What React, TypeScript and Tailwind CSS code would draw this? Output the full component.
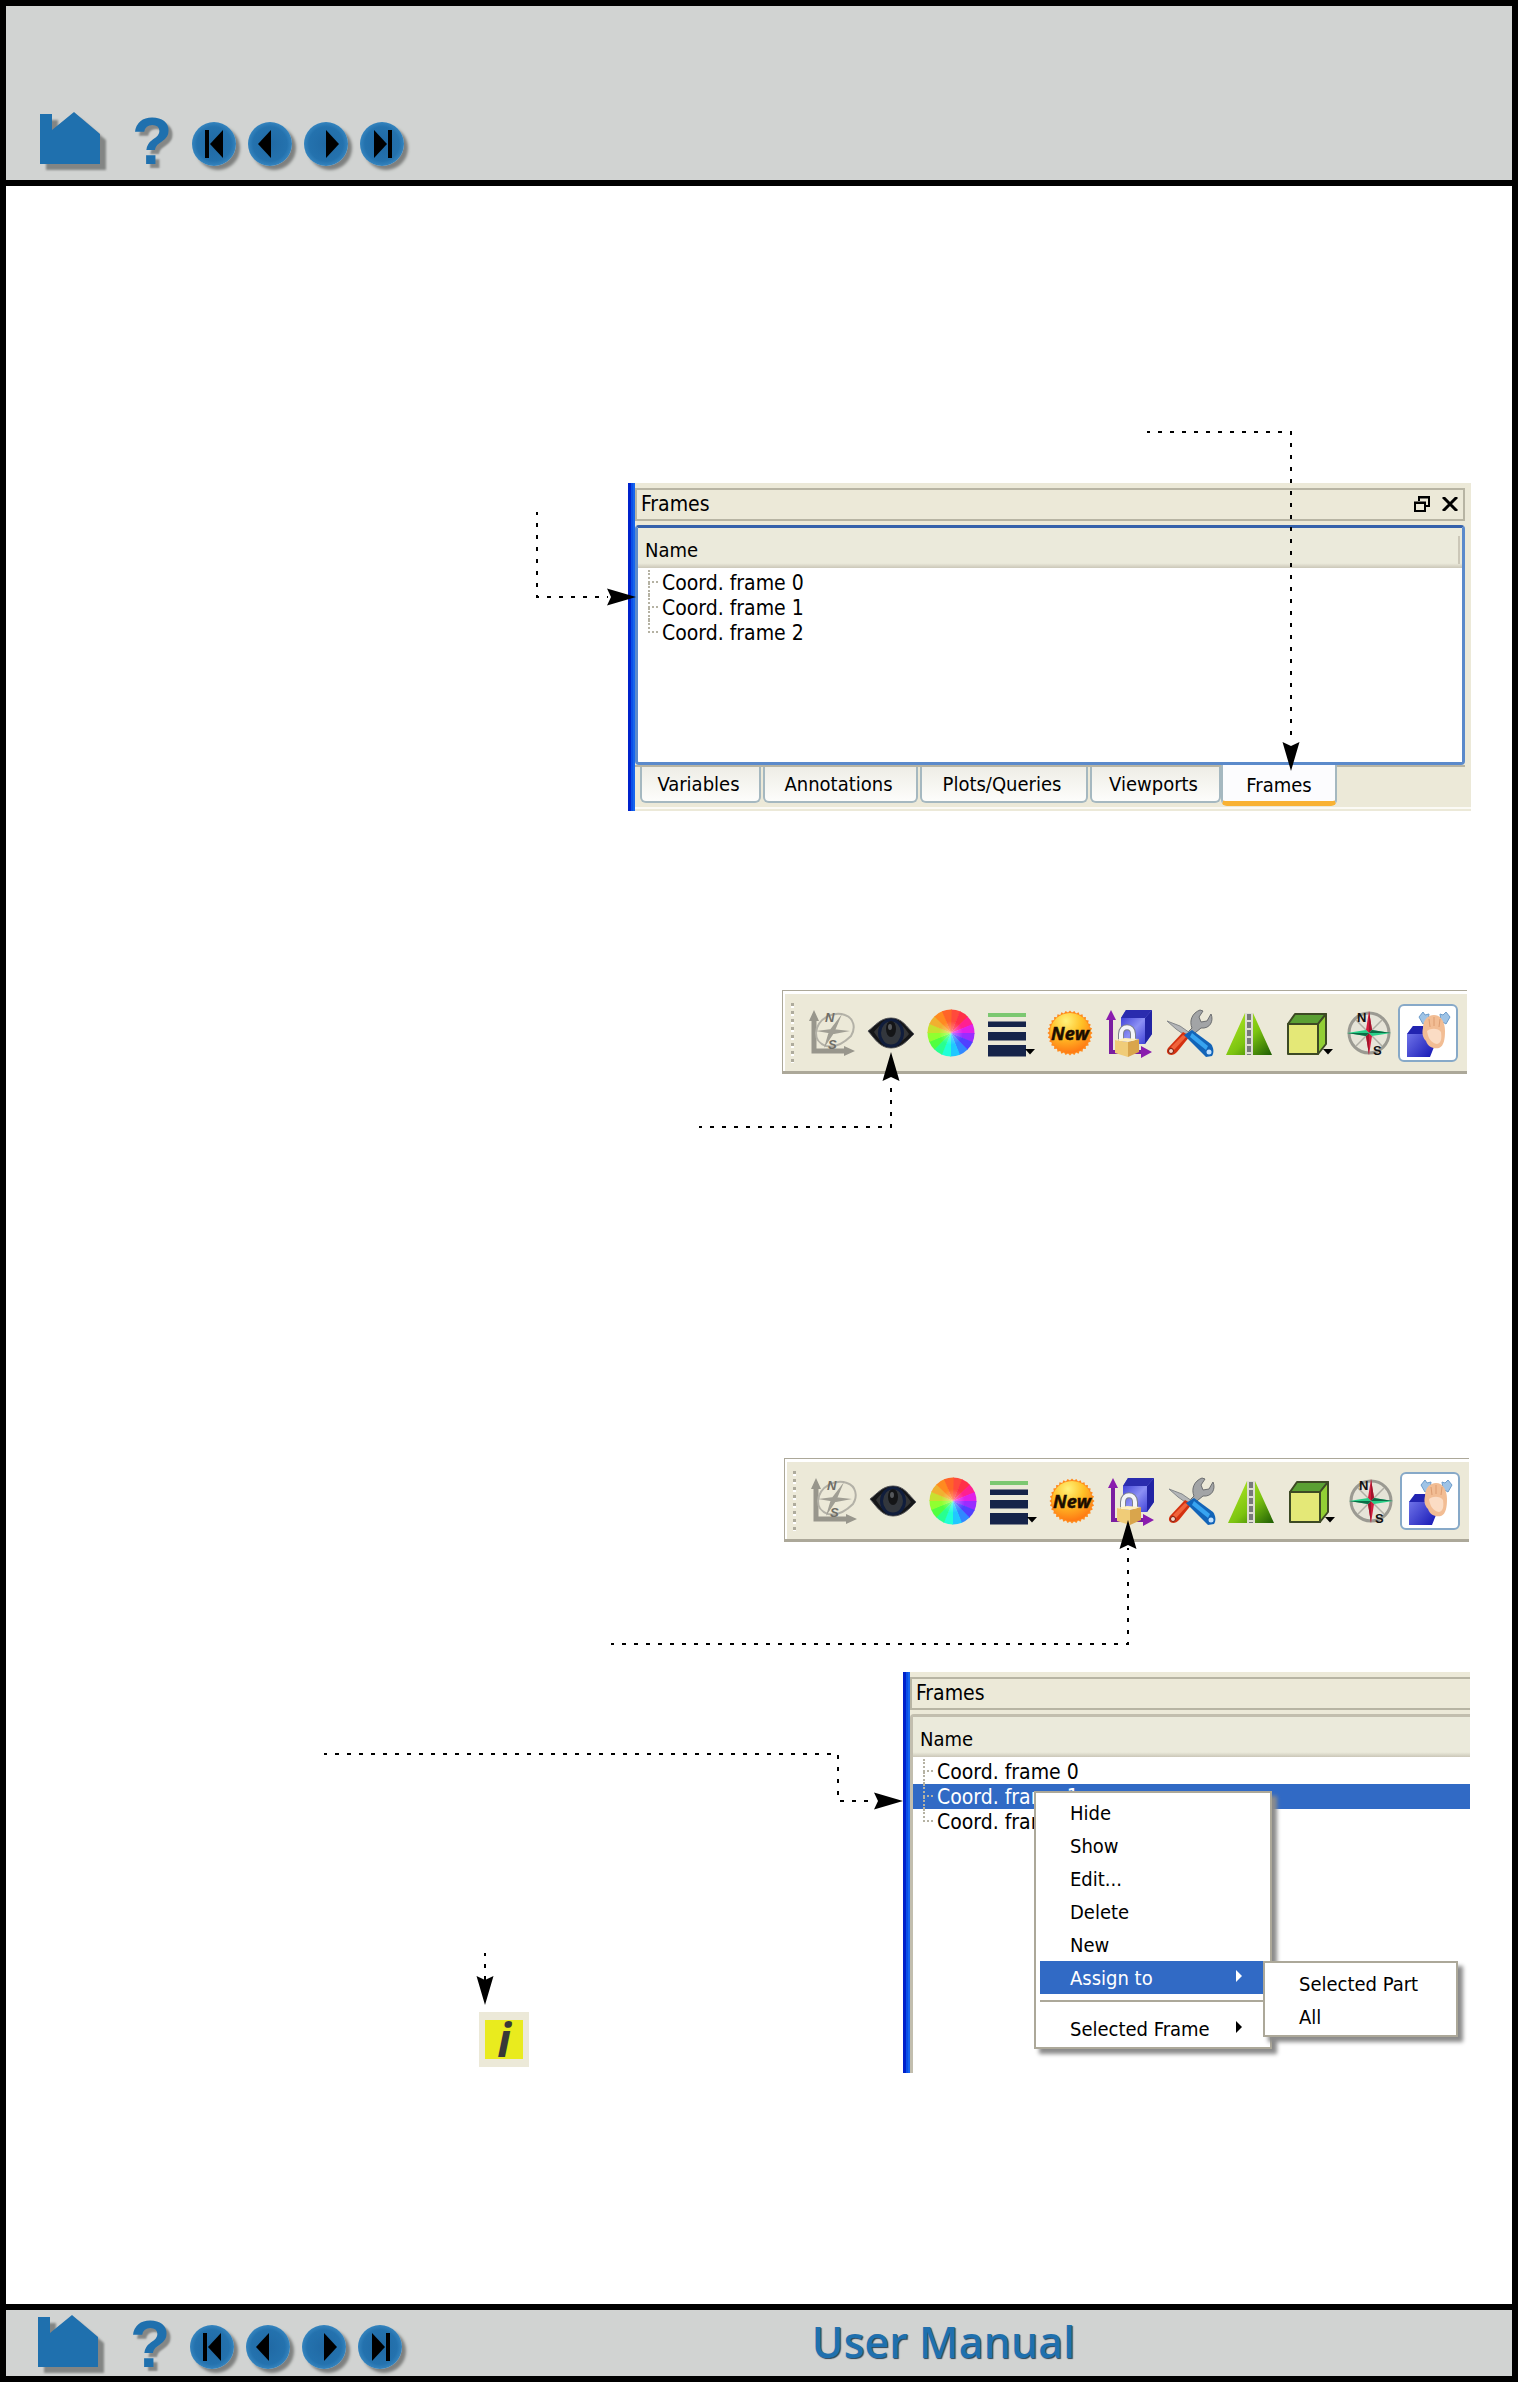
import React from "react";

const UI_FONT = "font-['DejaVu_Sans_Condensed','DejaVu_Sans',sans-serif]";

/* ---------- navigation bars ---------- */

function House() {
  return (
    <svg viewBox="0 0 68 60" className="h-[60px] w-[68px]" aria-hidden="true">
      <defs>
        <filter id="soft" x="-20%" y="-20%" width="140%" height="140%">
          <feGaussianBlur stdDeviation="1" />
        </filter>
      </defs>
      <path d="M6 8H18V23L40 6L66 28V58H6Z" fill="#838584" filter="url(#soft)" />
      <path d="M0 2H12V18L34 0L60 22V52H0Z" fill="#1f70ae" />
    </svg>
  );
}

const GLYPHS: Record<string, React.ReactNode> = {
  First: (
    <>
      <rect x="13" y="8" width="4" height="28" />
      <path d="M18 22L31 8V36Z" />
    </>
  ),
  Previous: <path d="M10 22L23 8V36Z" />,
  Next: <path d="M35 22L22 8V36Z" />,
  Last: (
    <>
      <path d="M27 22L14 8V36Z" />
      <rect x="28" y="8" width="4" height="28" />
    </>
  ),
};

function RoundButton({ name }: { name: string }) {
  return (
    <button
      type="button"
      aria-label={name}
      className="h-11 w-11 rounded-full bg-[radial-gradient(circle_at_50%_50%,#2069a4_0%,#2472ae_55%,#4a9bd3_90%,#2a70a5_100%)] shadow-[4px_4px_3px_#7e807f]"
    >
      <svg viewBox="0 0 44 44" className="h-11 w-11" fill="#000" aria-hidden="true">
        {GLYPHS[name]}
      </svg>
    </button>
  );
}

function NavIcons() {
  return (
    <nav className="flex items-end" aria-label="Manual pages">
      <a href="#home" aria-label="Home" className="-mb-1.5 block">
        <House />
      </a>
      <a
        href="#help"
        className="ml-6 block w-10 text-center font-['Liberation_Sans',sans-serif] text-[66px] font-bold leading-[50px] text-[#1f70ae] [text-shadow:4px_4px_2px_#858786]"
      >
        ?
      </a>
      <div className="ml-5 flex gap-3">
        {["First", "Previous", "Next", "Last"].map((n) => (
          <RoundButton key={n} name={n} />
        ))}
      </div>
    </nav>
  );
}

/* ---------- dotted callouts ---------- */

function Callout({
  w,
  h,
  line,
  head,
  className,
}: {
  w: number;
  h: number;
  line: string;
  head: string;
  className: string;
}) {
  return (
    <svg
      width={w}
      height={h}
      viewBox={`0 0 ${w} ${h}`}
      className={`pointer-events-none absolute z-10 overflow-visible ${className}`}
      aria-hidden="true"
    >
      <path d={line} fill="none" stroke="#000" strokeWidth="2" strokeDasharray="4 8" strokeDashoffset="1" />
      <path d={head} fill="#000" />
    </svg>
  );
}

/* ---------- toolbar ---------- */

const WHEEL = [
  "#ff4a3c", "#ff3048", "#ff2090", "#e020e8", "#9a2cff", "#5040ff",
  "#3088ff", "#20c8ff", "#20ffd8", "#28ff90", "#50ff40", "#90ff30",
  "#c8e030", "#f0b030", "#ff8a20", "#ff6428",
];

function ColorWheel() {
  const p = (a: number) => `${24 + 23.5 * Math.sin(a)} ${24 - 23.5 * Math.cos(a)}`;
  const step = (2 * Math.PI) / 16;
  return (
    <>
      {WHEEL.map((c, i) => (
        <path key={c} d={`M24 24L${p(i * step)}A23.5 23.5 0 0 1 ${p((i + 1) * step + 0.03)}Z`} fill={c} />
      ))}
      <circle cx="24" cy="24" r="12" fill="url(#wheelGlow)" />
    </>
  );
}

const SPIKES = Array.from({ length: 64 }, (_, i) => {
  const r = i % 2 ? 20.5 : 22.5;
  const a = (i * Math.PI) / 32;
  return `${(24 + r * Math.sin(a)).toFixed(1)},${(24 - r * Math.cos(a)).toFixed(1)}`;
}).join(" ");

const Caret = () => <path d="M38 40H48L43 45.500Z" fill="#000" />;

const TOOLS: { name: string; art: React.ReactNode }[] = [
  {
    name: "Frame axes",
    art: (
      <g fill="none" stroke="#98968c" strokeWidth="2">
        <path d="M6 9V42H38" strokeWidth="5" />
        <path d="M1 12L6 1L11 12ZM36 37L47 42L36 47Z" fill="#98968c" stroke="none" />
        <path d="M8 24C9 9 26 2 37 6C46 9 48 19 43 27C36 34 28 39 18 37C10 34 8 30 8 24Z" stroke="#b3b1a7" />
        <path d="M8 22L24 20L42 22L26 25ZM34 5L26 24L16 39L21 22Z" fill="#a09e94" stroke="none" />
        <text x="17" y="13" fontSize="13" fontStyle="italic" fontWeight="bold" fontFamily="Liberation Sans, sans-serif" fill="#6f6d66" stroke="none">N</text>
        <text x="20" y="40" fontSize="13" fontStyle="italic" fontWeight="bold" fontFamily="Liberation Sans, sans-serif" fill="#6f6d66" stroke="none">S</text>
      </g>
    ),
  },
  {
    name: "Visibility",
    art: (
      <>
        <path d="M1 22C8 17 13 9 24 9C35 9 39 17 47 25C40 32 34 39 24 39C13 39 8 30 1 22Z" fill="#151618" stroke="#55565a" strokeWidth="1" />
        <path d="M7 23C12 17 16 12 24 12C33 12 38 19 42 25C37 31 31 36 24 36C15 36 11 29 7 23Z" fill="#343537" />
        <ellipse cx="24" cy="24" rx="11.500" ry="13" fill="#33373d" stroke="#101d3c" strokeWidth="3" />
        <ellipse cx="24" cy="20" rx="5" ry="8" fill="#141517" />
        <ellipse cx="23" cy="18" rx="2" ry="3" fill="#55585c" />
      </>
    ),
  },
  { name: "Color", art: <ColorWheel /> },
  {
    name: "Line width",
    art: (
      <>
        <path d="M1 4H39V8H1Z" fill="#7cc871" />
        <path d="M1 12.500H39V18H1ZM1 23H39V31.500H1ZM1 36H39V47.500H1Z" fill="#16244a" />
        <Caret />
      </>
    ),
  },
  {
    name: "New",
    art: (
      <>
        <polygon points={SPIKES} fill="#ff8a1c" />
        <circle cx="24" cy="24" r="20" fill="url(#newFill)" />
        <text x="24" y="31" textAnchor="middle" fontSize="18" fontStyle="italic" fontWeight="bold" fontFamily="Open Sans, sans-serif" fill="#1c0d00" stroke="#1c0d00" strokeWidth="0.500">New</text>
      </>
    ),
  },
  {
    name: "Frame lock",
    art: (
      <>
        <path d="M5 10V43H36" fill="none" stroke="#7a1ea1" strokeWidth="4" />
        <path d="M0 11L5 1L10 11ZM35 37L46 43L35 49Z" fill="#8a1cae" />
        <path d="M15 9L20 1H46V25L39 35H15Z" fill="url(#blueBox)" />
        <path d="M15 9L20 1H46L39 9Z" fill="#2a2cae" />
        <path d="M39 9L46 1V25L39 35Z" fill="#2224a4" />
        <path d="M15 32V25C15 16 27 16 27 25V32" fill="none" stroke="#7d808b" strokeWidth="6" />
        <path d="M15 32V25C15 16 27 16 27 25V32" fill="none" stroke="#f4f5f8" strokeWidth="4" />
        <path d="M9 31L22 33V48L9 44Z" fill="#f0cc78" />
        <path d="M22 33L33 30V43L22 48Z" fill="#d9a54c" />
        <path d="M9 31L19 29L33 30L22 33Z" fill="#fff0bd" />
      </>
    ),
  },
  {
    name: "Tools",
    art: (
      <>
        <path d="M20 25L26 19C23 12 26 4 34 1L37 2L33 8L35 13L41 12L45 5C48 12 44 20 35 19L24 28Z" fill="#a2a4a6" stroke="#6c6e70" strokeWidth="1" />
        <path d="M1 12L14 17L24 24L20 27L10 20Z" fill="#b4b6b8" stroke="#85888a" strokeWidth="1" />
        <path d="M17 23L24 27L11 43C6 49 -2 45 2 39Z" fill="#d43110" />
        <path d="M17 26L20 28L8 41L5 38Z" fill="#f0643c" />
        <circle cx="5" cy="42" r="2.500" fill="#f3d6c8" stroke="#7c1a08" />
        <path d="M18 26L26 21L45 35C48 39 48 44 46 47L40 48Z" fill="#1264b8" />
        <path d="M26 24L42 37L40 41L24 28Z" fill="#38a4f0" />
        <circle cx="43" cy="43" r="2.500" fill="#bfe0ff" />
      </>
    ),
  },
  {
    name: "Clip",
    art: (
      <>
        <path d="M20 4L1 46H20ZM28 4L47 46H28Z" fill="url(#road)" />
        <path d="M20 4H28V46H20Z" fill="#dddcd2" />
        <path d="M24 5V46" stroke="#77797b" strokeWidth="4" strokeDasharray="6 2" />
      </>
    ),
  },
  {
    name: "Box",
    art: (
      <g stroke="#3d4a24" strokeWidth="2" strokeLinejoin="round">
        <path d="M3 15L10 5H41L33 15Z" fill="#5aa033" />
        <path d="M33 15L41 5V35L33 45Z" fill="#92cf35" />
        <path d="M3 15H33V45H3Z" fill="#e4e877" />
        <g stroke="none">
          <Caret />
        </g>
      </g>
    ),
  },
  {
    name: "Compass",
    art: (
      <>
        <circle cx="24" cy="24" r="20" fill="#e6e4d8" stroke="#9b9a92" strokeWidth="3" />
        <path d="M11 11L37 37M37 11L11 37" stroke="#b0aea4" strokeWidth="1.500" />
        <path d="M24 2L27 21L24 24L21 21ZM24 46L21 27L24 24L27 27Z" fill="#d11c3c" />
        <path d="M24 2V24L27 21ZM24 46V24L21 27Z" fill="#a0142c" />
        <path d="M2 24L21 21L24 24L21 27ZM46 24L27 27L24 24L27 21Z" fill="#28cf88" />
        <path d="M2 24H24L21 27ZM46 24H24L27 21Z" fill="#0d6b45" />
        <text x="12" y="13" fontSize="13" fontWeight="bold" fontFamily="Liberation Sans, sans-serif" fill="#111">N</text>
        <text x="28" y="46" fontSize="13" fontWeight="bold" fontFamily="Liberation Sans, sans-serif" fill="#111">S</text>
      </>
    ),
  },
  {
    name: "Pick",
    art: (
      <>
        <path d="M3 25L9 17H30V38L26 48H3Z" fill="url(#blueBox2)" />
        <path d="M3 25L9 17H30L24 25Z" fill="#2224b0" />
        <path d="M15 8L19 3L21 6L25 5L24 12L19 15ZM46 8L42 3L39 6L36 5L37 12L42 15Z" fill="#9ec3e6" stroke="#6d9ccb" />
        <path d="M19 19C19 11 24 6 30 6C37 6 41 13 41 22C41 30 40 37 35 39C29 40 24 38 22 32C18 28 18 23 19 19Z" fill="#f2bd94" />
        <path d="M23 22C27 19 34 19 37 23C38 30 37 34 33 35C27 34 24 29 23 22Z" fill="#fbdcc4" />
        <path d="M25 10L26 18M30 8V17M36 10L35 18" stroke="#dc9c70" strokeWidth="1" />
      </>
    ),
  },
];

function ToolArtDefs() {
  return (
    <svg width="0" height="0" className="absolute" aria-hidden="true">
      <defs>
        <radialGradient id="wheelGlow">
          <stop offset="0" stopColor="#fff" stopOpacity="0.400" />
          <stop offset="1" stopColor="#fff" stopOpacity="0" />
        </radialGradient>
        <radialGradient id="newFill" cx="0.400" cy="0.200" r="0.800">
          <stop offset="0" stopColor="#fff27a" />
          <stop offset="0.500" stopColor="#ffc026" />
          <stop offset="1" stopColor="#ff7a14" />
        </radialGradient>
        <linearGradient id="blueBox" x1="0" y1="0" x2="1" y2="1">
          <stop offset="0" stopColor="#2c2ed0" />
          <stop offset="0.500" stopColor="#8c90f4" />
          <stop offset="1" stopColor="#2c2ed0" />
        </linearGradient>
        <linearGradient id="blueBox2" x1="0" y1="0" x2="1" y2="1">
          <stop offset="0" stopColor="#7c80f0" />
          <stop offset="1" stopColor="#1416b4" />
        </linearGradient>
        <linearGradient id="road" x1="0" y1="0" x2="1" y2="1">
          <stop offset="0" stopColor="#b8ec28" />
          <stop offset="0.550" stopColor="#7cc410" />
          <stop offset="1" stopColor="#1e5c04" />
        </linearGradient>
      </defs>
    </svg>
  );
}

function Toolbar() {
  return (
    <div
      role="toolbar"
      aria-label="Frame tools"
      className="flex h-[84px] w-[685px] items-center border-b-[3px] border-l border-t border-[#aca899] bg-[#ece9d8] pl-2 pr-[9px] pt-[3px] shadow-[inset_2px_3px_0_#fff]"
    >
      <div className="mr-2 h-[60px] w-[3px] bg-[repeating-linear-gradient(180deg,#aeab9c_0_3px,#fff_3px_5px,transparent_5px_8px)]" />
      <div className="grid flex-1 grid-cols-11">
        {TOOLS.map((t, i) => (
          <button
            key={t.name}
            type="button"
            aria-label={t.name}
            className={
              i === 10
                ? "flex h-[58px] items-center justify-center rounded-md border-2 border-[#87a9c8] bg-white"
                : "flex h-[58px] items-center justify-center"
            }
          >
            <svg viewBox="0 0 48 48" className="h-12 w-12 overflow-visible" aria-hidden="true">
              {t.art}
            </svg>
          </button>
        ))}
      </div>
    </div>
  );
}

/* ---------- frames panels ---------- */

function FrameTree({ selected }: { selected?: number }) {
  return (
    <ul className="pt-[2px] text-[21px]">
      {[0, 1, 2].map((n) => (
        <li key={n} className={n === selected ? "flex h-[25px] items-center bg-[#316ac5] text-white" : "flex h-[25px] items-center"}>
          <span className="ml-[10px] mr-1 flex h-full w-[10px] flex-col" aria-hidden="true">
            <span className="h-[13px] border-b-2 border-l-2 border-dotted border-[#b5b2a3]" />
            {n < 2 && <span className="flex-1 border-l-2 border-dotted border-[#b5b2a3]" />}
          </span>
          Coord. frame {n}
        </li>
      ))}
    </ul>
  );
}

function WindowEdge() {
  return <div className="w-[7px] shrink-0 bg-[linear-gradient(90deg,#0022cc_0_3px,#0a50e8_3px_5px,#1664ee_5px)]" />;
}

const COLUMN_HEAD = "flex items-center bg-[linear-gradient(180deg,#ebeadb_88%,#cbc7b8)] pl-[7px] pt-1";
const TAB =
  "flex h-9 items-center justify-center rounded-b-md border-2 border-t-0 border-[#a5b8c0] bg-[linear-gradient(180deg,#eeede6,#fdfdfb)] pr-1";

function FramesPanel() {
  return (
    <section className={`flex h-[328px] w-[843px] bg-[#ece9d8] text-[20px] leading-6 text-black ${UI_FONT}`}>
      <WindowEdge />
      <div className="flex min-w-0 flex-1 flex-col pr-[6px] pt-[5px]">
        <header className="flex h-[33px] shrink-0 items-center border-2 border-[#b7b4a3] pb-[2px] pl-1 pr-[5px]">
          <h2 className="flex-1 text-[21px]">Frames</h2>
          <button type="button" aria-label="Restore" className="mr-3">
            <svg viewBox="0 0 16 17" className="h-[17px] w-4" fill="none" stroke="#000" strokeWidth="2" aria-hidden="true">
              <path d="M5 6V2H15V11H12M4 2.500H16" />
              <path d="M1 7.500H11V16H1ZM0 8H12" />
            </svg>
          </button>
          <button type="button" aria-label="Close">
            <svg viewBox="0 0 16 14" className="h-[14px] w-4" fill="none" stroke="#000" strokeWidth="3" aria-hidden="true">
              <path d="M1 0L15 14M15 0L1 14" />
            </svg>
          </button>
        </header>
        <div className="mt-1 h-[240px] rounded-[4px] border-[3px] border-[#5b8acb] border-t-[#3561ab] bg-white">
          <div className={`h-10 pr-[2px] ${COLUMN_HEAD}`}>
            <span className="flex-1">Name</span>
            <span className="h-7 w-[2px] bg-[#cbc7b8]" />
          </div>
          <FrameTree />
        </div>
        <div role="tablist" className="flex border-t-2 border-[#b7b4a3] pl-[5px]">
          <button type="button" role="tab" className={`w-[121px] ${TAB}`}>Variables</button>
          <button type="button" role="tab" className={`ml-[2px] w-[155px] ${TAB}`}>Annotations</button>
          <button type="button" role="tab" className={`ml-[2px] w-[168px] ${TAB}`}>Plots/Queries</button>
          <button type="button" role="tab" className={`ml-[2px] w-[131px] ${TAB}`}>Viewports</button>
          <button
            type="button"
            role="tab"
            aria-selected="true"
            className="-mt-[2px] flex h-[41px] w-[116px] items-center justify-center rounded-b-md border-x-2 border-b-[5px] border-x-[#a5b8c0] border-b-[#f9b233] bg-[#fcfcfe] pt-1"
          >
            Frames
          </button>
        </div>
        <div className="-mr-[6px] mt-px h-[2px] bg-[#fbfaf5]" />
      </div>
    </section>
  );
}

const MENU = "absolute z-20 border-2 border-[#aca899] bg-white px-1 text-black shadow-[5px_5px_4px_#8c8c8c]";

function MenuItem({ label, arrow, active }: { label: string; arrow?: boolean; active?: boolean }) {
  return (
    <li role="none">
      <button
        type="button"
        role="menuitem"
        className={
          active
            ? "flex h-[33px] w-full items-center bg-[#316ac5] pl-[30px] pr-6 text-white"
            : "flex h-[33px] w-full items-center pl-[30px] pr-6"
        }
      >
        <span className="flex-1 whitespace-nowrap text-left">{label}</span>
        {arrow && (
          <svg viewBox="0 0 6 12" className="-mt-1 h-3 w-[6px]" fill="currentColor" aria-hidden="true">
            <path d="M0 0L6 6L0 12Z" />
          </svg>
        )}
      </button>
    </li>
  );
}

function FramesPanelWithMenu() {
  return (
    <section className={`relative flex h-[401px] w-[567px] bg-[#ece9d8] text-[20px] leading-6 text-black ${UI_FONT}`}>
      <WindowEdge />
      <div className="flex min-w-0 flex-1 flex-col pt-[5px]">
        <header className="flex h-[33px] shrink-0 items-center border-2 border-r-0 border-[#b7b4a3] pb-[2px] pl-1">
          <h2 className="text-[21px]">Frames</h2>
        </header>
        <div className="mt-1 flex-1 rounded-tl-[4px] border-l-[3px] border-t-[3px] border-[#c2beae] bg-white">
          <div className={`h-10 ${COLUMN_HEAD}`}>Name</div>
          <FrameTree selected={1} />
        </div>
      </div>
      <ul role="menu" className={`left-[131px] top-[119px] w-[238px] pb-[2px] pt-[3px] ${MENU}`}>
        <MenuItem label="Hide" />
        <MenuItem label="Show" />
        <MenuItem label="Edit..." />
        <MenuItem label="Delete" />
        <MenuItem label="New" />
        <MenuItem label="Assign to" arrow active />
        <li role="separator" className="mb-[10px] mt-1.5 h-[2px] bg-[#aca899]" />
        <MenuItem label="Selected Frame" arrow />
      </ul>
      <ul role="menu" className={`left-[360px] top-[289px] w-[195px] pb-[2px] pt-1 ${MENU}`}>
        <MenuItem label="Selected Part" />
        <MenuItem label="All" />
      </ul>
    </section>
  );
}

/* ---------- page ---------- */

export default function App() {
  return (
    <div className="flex min-h-screen flex-col border-[6px] border-black bg-white">
      <ToolArtDefs />
      <header className="flex h-[180px] items-end border-b-[6px] border-black bg-[#d1d3d2] pb-[14px] pl-[34px]">
        <NavIcons />
      </header>

      <main className="flex flex-1 flex-col items-end pr-[41px] pt-[297px]">
        <div className="relative">
          <FramesPanel />
          <Callout className="right-[835px] top-[29px]" w={100} h={95} line="M1 0V85H72" head="M100 85L71 76.500L75 85L71 93.500Z" />
          <Callout className="-top-[52px] right-[171px]" w={154} h={341} line="M1 1H145V312" head="M145 340L136.500 311L145 315L153.500 311Z" />
        </div>

        <div className="relative mr-1 mt-[179px]">
          <Toolbar />
          <Callout className="right-[567px] top-[62px]" w={201} h={77} line="M0 75H192V28" head="M192 0L183.500 29L192 25L200.500 29Z" />
        </div>

        <div className="relative mr-[2px] mt-[384px]">
          <Toolbar />
          <Callout className="right-[332px] top-[62px]" w={526} h={126} line="M0 124H517V28" head="M517 0L508.500 29L517 25L525.500 29Z" />
        </div>

        <div className="relative mr-[1px] mt-[130px]">
          <FramesPanelWithMenu />
          <Callout className="right-[567px] top-[81px]" w={579} h={57} line="M0 1H514V48H551" head="M579 48L550 39.500L554 48L550 56.500Z" />
          <div className="absolute right-[941px] top-[340px] flex h-[55px] w-[50px] items-center justify-center bg-[#ece9d8]">
            <button
              type="button"
              aria-label="Information"
              className="flex h-[39px] w-[38px] items-center justify-center bg-[#e9eb1e] font-['Open_Sans',sans-serif] text-[46px] font-bold italic leading-[39px] text-[#383838]"
            >
              i
            </button>
            <Callout className="-top-[60px] left-0" w={14} h={54} line="M6 1V28" head="M6 53L-2.500 24L6 28L14.500 24Z" />
          </div>
        </div>
      </main>

      <footer className="relative flex h-[72px] items-end border-t-[6px] border-black bg-[#d1d3d2] pb-[7px] pl-8">
        <NavIcons />
        <p className="absolute left-[53.5%] top-2 font-['Open_Sans',sans-serif] text-[43px] font-semibold leading-[48px] text-[#1f70ae] [text-shadow:1px_1px_1px_#2c4356]">
          User Manual
        </p>
      </footer>
    </div>
  );
}
